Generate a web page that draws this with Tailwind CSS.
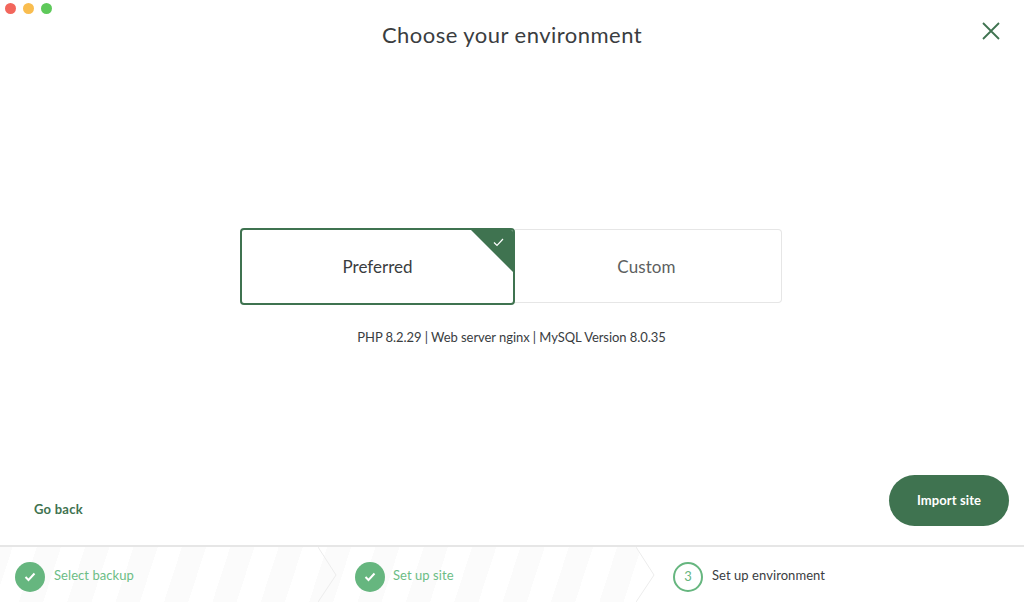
<!DOCTYPE html>
<html>
<head>
<meta charset="utf-8">
<script src="https://cdn.jsdelivr.net/npm/@tailwindcss/browser@4"></script>
</head>
<body class="bg-white">
<div class="relative w-[1024px] h-[602px] overflow-hidden flex flex-col bg-white font-['Lato','Noto_Sans',sans-serif] text-[#3a3d3f]">
  <div class="absolute left-[5px] top-[3px] flex gap-[7px]">
    <span class="w-[11px] h-[11px] rounded-full bg-[#f2665c]"></span>
    <span class="w-[11px] h-[11px] rounded-full bg-[#f9bd4f]"></span>
    <span class="w-[11px] h-[11px] rounded-full bg-[#5ec95a]"></span>
  </div>
  <header class="h-[71px] shrink-0 flex items-center justify-center pb-[2px]">
    <h1 class="text-[22px] leading-none tracking-[0.47px]">Choose your environment</h1>
  </header>
  <svg class="absolute left-[982px] top-[22px]" width="18" height="18" viewBox="0 0 18 18" fill="none" stroke="#3f7350" stroke-width="1.8"><path d="M1 1l16 16M17 1L1 17"/></svg>
  <main class="flex-1 flex flex-col items-center pt-[157px]">
    <div class="flex w-[542px] h-[77px] ml-[-2px]">
      <div class="relative w-[275px] h-[77px] shrink-0 border-2 border-[#3f7350] rounded-[4px] flex items-center justify-center text-[17px] overflow-hidden">
        Preferred
        <div class="absolute right-[-2px] top-[-2px] w-[46px] h-[46px] bg-[#3f7350] [clip-path:polygon(0_0,100%_0,100%_100%)]"></div>
        <svg class="absolute right-[9px] top-[8px]" width="11" height="9" viewBox="0 0 11 9" fill="none" stroke="#fff" stroke-width="1.2"><path d="M1 4.5l3 3L10 1"/></svg>
      </div>
      <div class="flex-1 h-[74px] mt-[1px] border border-l-0 border-[#e6e6e6] rounded-r-[4px] flex items-center justify-center pr-[3px] pt-[1px] text-[17px] tracking-[0.1px] text-[#5d5f61]">Custom</div>
    </div>
    <p class="mt-[23px] text-[13px] leading-[18px] ml-[-1px] tracking-[-0.06px]">PHP 8.2.29 | Web server nginx | MySQL Version 8.0.35</p>
  </main>
  <div class="flex items-center justify-between pl-[34px] pr-[15px] pb-[19px] shrink-0">
    <button class="text-[13px] font-bold tracking-[0.25px] text-[#3f7350] mt-[18px]">Go back</button>
    <button class="w-[120px] h-[51px] rounded-full bg-[#3f7350] text-white text-[13px] font-bold tracking-[0.1px]">Import site</button>
  </div>
  <footer class="relative h-[57px] shrink-0 border-t-2 border-[#e6e6e6] flex text-[13px]">
    <div class="w-[658px] shrink-0 flex [clip-path:polygon(0_0,636px_0,654px_50%,636px_100%,0_100%)] bg-[repeating-linear-gradient(108deg,#fbfbfb_0,#fbfbfb_12px,#ffffff_12px,#ffffff_35px,#fbfbfb_35px,#fbfbfb_46px)]">
      <div class="w-[340px] shrink-0 flex items-center pl-[15px] pt-[5px] gap-[9px] text-[#6cbd85] tracking-[0.06px]">
        <span class="w-[30px] h-[30px] rounded-full bg-[#66b67f] flex items-center justify-center"><svg width="12" height="10" viewBox="0 0 12 10" fill="none" stroke="#fff" stroke-width="2"><path d="M1.5 5l3 3L10.5 1.5"/></svg></span>
        <span class="mt-[-2px]">Select backup</span>
      </div>
      <div class="w-[318px] shrink-0 flex items-center pl-[15px] pt-[5px] gap-[8px] text-[#6cbd85] tracking-[0.06px]">
        <span class="w-[30px] h-[30px] rounded-full bg-[#66b67f] flex items-center justify-center"><svg width="12" height="10" viewBox="0 0 12 10" fill="none" stroke="#fff" stroke-width="2"><path d="M1.5 5l3 3L10.5 1.5"/></svg></span>
        <span class="mt-[-2px]">Set up site</span>
      </div>
    </div>
    <svg class="absolute left-[318px] top-0" width="20" height="55" viewBox="0 0 20 55" fill="none" stroke="#ececec"><path d="M0 0L18 28L0 55"/></svg>
    <svg class="absolute left-[636px] top-0" width="20" height="55" viewBox="0 0 20 55" fill="none" stroke="#ececec"><path d="M0 0L18 28L0 55"/></svg>
    <div class="flex-1 flex items-center pl-[15px] pt-[5px] gap-[9px] text-[#3a3d3f] tracking-[0.06px]">
      <span class="w-[30px] h-[30px] rounded-full border-2 border-[#66b67f] flex items-center justify-center text-[13px] text-[#66b67f]">3</span>
      <span class="mt-[-2px]">Set up environment</span>
    </div>
  </footer>
</div>
</body>
</html>
